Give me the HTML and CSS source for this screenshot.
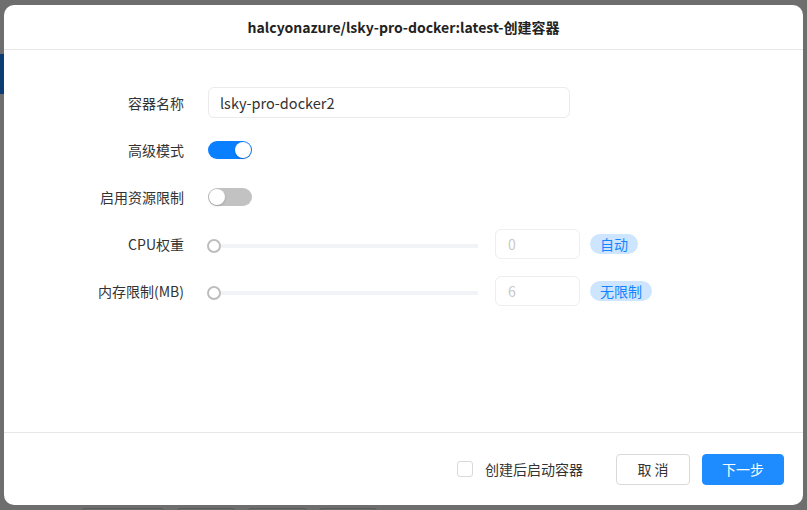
FILE: index.html
```html
<!DOCTYPE html>
<html lang="zh-CN">
<head>
    <meta charset="UTF-8">
    <meta name="viewport" content="width=device-width, initial-scale=1.0">
    <title>创建容器</title>
    <link rel="stylesheet" href="styles.css">
</head>
<body>
    <div class="side-tab"></div>
    <div class="under-buttons">
        <span class="ghost ghost-1"></span>
        <span class="ghost ghost-2"></span>
        <span class="ghost ghost-3"></span>
        <span class="ghost ghost-4"></span>
    </div>

    <div class="dialog">
        <div class="dialog-header">halcyonazure/lsky-pro-docker:latest-创建容器</div>

        <div class="dialog-body">
            <div class="form-row">
                <label class="form-label">容器名称</label>
                <div class="form-control">
                    <input class="text-input" type="text" value="lsky-pro-docker2">
                </div>
            </div>

            <div class="form-row">
                <label class="form-label">高级模式</label>
                <div class="form-control">
                    <span class="switch on"><span class="knob"></span></span>
                </div>
            </div>

            <div class="form-row">
                <label class="form-label">启用资源限制</label>
                <div class="form-control">
                    <span class="switch"><span class="knob"></span></span>
                </div>
            </div>

            <div class="form-row">
                <label class="form-label">CPU权重</label>
                <div class="form-control">
                    <div class="slider"><span class="track"></span><span class="thumb"></span></div>
                    <input class="num-input" type="text" value="0" disabled>
                    <span class="tag">自动</span>
                </div>
            </div>

            <div class="form-row">
                <label class="form-label">内存限制(MB)</label>
                <div class="form-control">
                    <div class="slider"><span class="track"></span><span class="thumb"></span></div>
                    <input class="num-input" type="text" value="6" disabled>
                    <span class="tag">无限制</span>
                </div>
            </div>
        </div>

        <div class="dialog-footer">
            <label class="check">
                <span class="check-box"></span>
                <span>创建后启动容器</span>
            </label>
            <button class="btn btn-default">取 消</button>
            <button class="btn btn-primary">下一步</button>
        </div>
    </div>
</body>
</html>
```

FILE: styles.css
```css
* {
    box-sizing: border-box;
}
html, body {
    margin: 0;
    height: 100%;
    overflow: hidden;
}
body {
    background: #6e6e6e;
    font-family: "Noto Sans CJK SC", "Noto Sans", sans-serif;
    font-size: 14px;
    color: #333;
    padding: 5px 4px;
    position: relative;
}

/* page behind the overlay */
.side-tab {
    position: absolute;
    left: 0;
    top: 54px;
    width: 4px;
    height: 40px;
    background: #0b3c73;
}
.under-buttons {
    position: absolute;
    left: 0;
    bottom: 0;
    width: 100%;
    height: 5px;
}
.ghost {
    position: absolute;
    top: 3px;
    height: 8px;
    border: 1px solid #5a5a5a;
    border-radius: 3px;
}
.ghost-1 { left: 82px; width: 82px; }
.ghost-2 { left: 177px; width: 58px; }
.ghost-3 { left: 248px; width: 59px; }
.ghost-4 { left: 319px; width: 58px; }

.dialog {
    position: relative;
    width: 799px;
    height: 500px;
    background: #fff;
    border-radius: 10px;
    display: flex;
    flex-direction: column;
}
.dialog-header {
    height: 45px;
    line-height: 44px;
    text-align: center;
    font-weight: bold;
    font-size: 14px;
    color: #222;
    border-bottom: 1px solid #e6e6e6;
}
.dialog-body {
    flex: 1;
    padding-top: 37px;
}
.form-row {
    display: flex;
    align-items: center;
    height: 31px;
    margin-bottom: 16px;
}
.form-label {
    width: 180px;
    text-align: right;
    color: #333;
}
.form-control {
    margin-left: 24px;
    display: flex;
    align-items: center;
}
.text-input {
    width: 362px;
    height: 31px;
    border: 1px solid #ebebeb;
    border-radius: 6px;
    padding: 0 11px;
    font: inherit;
    font-size: 14.5px;
    color: #333;
    outline: none;
}

.switch {
    position: relative;
    display: inline-block;
    width: 44px;
    height: 18px;
    border-radius: 9px;
    background: #c2c2c2;
}
.switch.on {
    background: #0a7fff;
}
.knob {
    position: absolute;
    top: 1px;
    left: 1px;
    width: 16px;
    height: 16px;
    border-radius: 50%;
    background: #fff;
    box-shadow: 0 1px 2px rgba(0, 0, 0, 0.2);
}
.switch.on .knob {
    left: 27px;
}

.slider {
    position: relative;
    width: 270px;
    height: 14px;
    margin-top: 4px;
}
.track {
    position: absolute;
    left: 4px;
    right: 0;
    top: 5px;
    height: 4px;
    background: #f1f3f6;
}
.thumb {
    position: absolute;
    left: -1px;
    top: 0;
    width: 14px;
    height: 14px;
    border-radius: 50%;
    border: 2px solid #bdbdbd;
    background: #fff;
}
.num-input {
    width: 85px;
    height: 30px;
    margin-left: 17px;
    border: 1px solid #eeeeee;
    border-radius: 6px;
    background: #fff;
    padding: 0 12px;
    font: inherit;
    font-size: 14px;
    color: #c8c8c8;
}
.tag {
    margin-left: 10px;
    height: 20px;
    line-height: 20px;
    padding: 0 10px;
    border-radius: 10px;
    background: #cde5ff;
    color: #1784ff;
    font-size: 14px;
}

.dialog-footer {
    height: 73px;
    border-top: 1px solid #e6e6e6;
    display: flex;
    align-items: center;
    justify-content: flex-end;
    padding-right: 19px;
}
.check {
    display: flex;
    align-items: center;
    margin-right: 33px;
    color: #333;
}
.check-box {
    width: 16px;
    height: 16px;
    border: 1px solid #d9d9d9;
    border-radius: 3px;
    margin-right: 12px;
}
.btn {
    height: 31px;
    border-radius: 4px;
    font: inherit;
    font-size: 14px;
    cursor: pointer;
}
.btn-default {
    width: 74px;
    background: #fff;
    border: 1px solid #d9d9d9;
    color: #333;
}
.btn-primary {
    width: 82px;
    margin-left: 12px;
    background: #1e8cff;
    border: 1px solid #1e8cff;
    color: #fff;
}
```
